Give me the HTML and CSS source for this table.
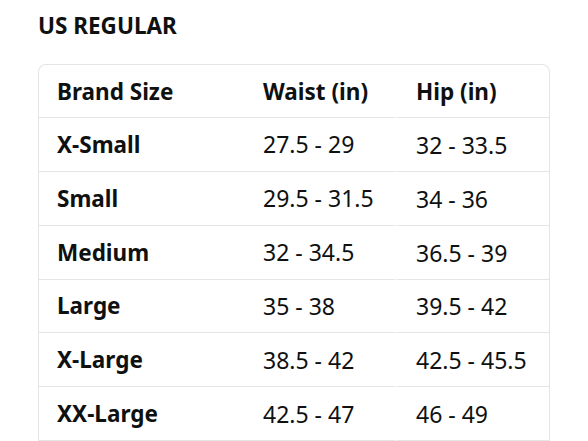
FILE: index.html
```html
<!DOCTYPE html>
<html>
<head>
<meta charset="utf-8">
<link rel="stylesheet" href="styles.css">
</head>
<body>
<section class="chart">
  <h2 class="title">US REGULAR</h2>
  <div class="table-wrap">
    <table class="size-table">
      <thead>
        <tr><th>Brand Size</th><th>Waist (in)</th><th>Hip (in)</th></tr>
      </thead>
      <tbody>
        <tr><th>X-Small</th><td>27.5 - 29</td><td>32 - 33.5</td></tr>
        <tr><th>Small</th><td>29.5 - 31.5</td><td>34 - 36</td></tr>
        <tr><th>Medium</th><td>32 - 34.5</td><td>36.5 - 39</td></tr>
        <tr><th>Large</th><td>35 - 38</td><td>39.5 - 42</td></tr>
        <tr><th>X-Large</th><td>38.5 - 42</td><td>42.5 - 45.5</td></tr>
        <tr><th>XX-Large</th><td>42.5 - 47</td><td>46 - 49</td></tr>
      </tbody>
    </table>
  </div>
</section>
</body>
</html>
```
FILE: styles.css
```css
html, body {
  margin: 0;
  padding: 0;
  background: #ffffff;
}
body {
  font-family: "Noto Sans", "Open Sans", sans-serif;
  color: #0f1111;
}
.chart {
  padding: 11px 38px 0 38px;
}
.title {
  margin: 0;
  font-size: 22.5px;
  font-weight: 700;
  line-height: 30px;
}
.table-wrap {
  margin-top: 23px;
  width: 510px;
  border: 1px solid #e3e6e6;
  border-bottom: none;
  border-radius: 8px 8px 0 0;
  overflow: hidden;
}
.size-table {
  width: 100%;
  border-collapse: separate;
  border-spacing: 0;
  table-layout: fixed;
}
.size-table th,
.size-table td {
  padding: 0 0 0 20px;
  text-align: left;
  font-size: 23px;
  border-bottom: 1px solid #e3e6e6;
  white-space: nowrap;
}
.size-table thead th { height: 52px; font-size: 22.5px; }
.size-table tbody th,
.size-table tbody td { height: 52.85px; }
.size-table tbody th { font-size: 22.5px; }
.size-table th { font-weight: 700; }
.size-table td { font-weight: 400; }
.size-table tr > :nth-child(1) { width: 186px; padding-left: 18px; }
.size-table tr > :nth-child(2) { width: 133px; }
.size-table tr > :nth-child(3) {
  border-bottom: none;
  background: linear-gradient(#e3e6e6, #e3e6e6) 1px 100% / calc(100% - 1px) 1px no-repeat;
}
```
